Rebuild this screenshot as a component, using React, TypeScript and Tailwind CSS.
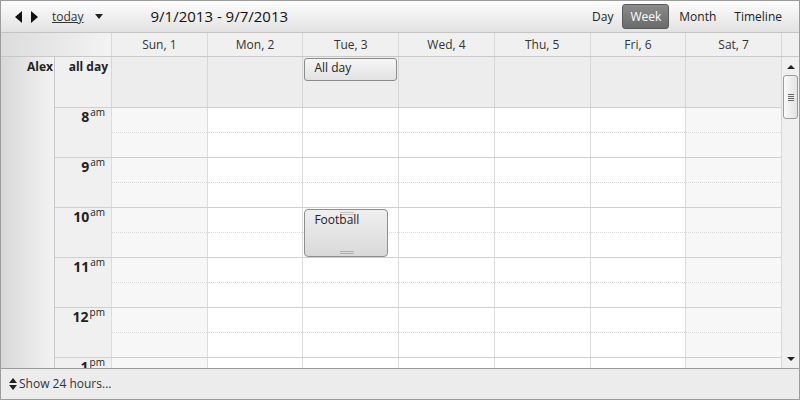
import React from "react";

const days = ["Sun, 1", "Mon, 2", "Tue, 3", "Wed, 4", "Thu, 5", "Fri, 6", "Sat, 7"];
const hours = [
  { h: "8", m: "am" },
  { h: "9", m: "am" },
  { h: "10", m: "am" },
  { h: "11", m: "am" },
  { h: "12", m: "pm" },
  { h: "1", m: "pm" },
];

function Arrows() {
  return (
    <svg width="24" height="12" viewBox="0 0 24 12">
      <path d="M7 0 L7 12 L0 6 Z" fill="#111" />
      <path d="M16 0 L16 12 L23 6 Z" fill="#111" />
    </svg>
  );
}

export default function App() {
  return (
    <div
      className="w-[800px] h-[400px] border border-[#9c9c9c] flex flex-col bg-white text-[#333] overflow-hidden"
      style={{ fontFamily: '"Open Sans", "Noto Sans", sans-serif' }}
    >
      {/* toolbar */}
      <div className="h-[32px] shrink-0 border-b border-[#c4c4c4] bg-gradient-to-b from-[#fdfdfd] to-[#e2e2e2] flex items-center">
        <div className="ml-[14px] mt-[1px]">
          <Arrows />
        </div>
        <span className="ml-[13px] text-[12px] underline text-[#333]">today</span>
        <svg className="ml-[11px]" width="8" height="5" viewBox="0 0 8 5">
          <path d="M0 0 L8 0 L4 5 Z" fill="#222" />
        </svg>
        <span className="ml-[48px] text-[15px] text-[#111]">9/1/2013 - 9/7/2013</span>
        <div className="ml-auto mr-[17px] flex items-center text-[12px] text-[#222]">
          <span className="mr-[9px]">Day</span>
          <span className="h-[25px] px-[7px] flex items-center rounded-[3px] border border-[#5a5a5a] bg-gradient-to-b from-[#8c8c8c] to-[#6a6a6a] text-white mr-[10px]">
            Week
          </span>
          <span className="mr-[18px]">Month</span>
          <span>Timeline</span>
        </div>
      </div>

      {/* header */}
      <div className="h-[24px] shrink-0 flex border-b border-[#c8c8c8] bg-[#f0f0f0] text-[12px]">
        <div className="w-[110px] shrink-0 bg-gradient-to-r from-[#dcdcdc] to-[#f3f3f3]" />
        <div className="flex-1 grid grid-cols-7">
          {days.map((d) => (
            <div key={d} className="border-l border-[#d8d8d8] flex items-center justify-center">
              {d}
            </div>
          ))}
        </div>
        <div className="w-[18px] shrink-0 border-l border-[#d8d8d8]" />
      </div>

      {/* body */}
      <div className="flex-1 flex min-h-0">
        <div className="w-[54px] shrink-0 border-r border-[#c8c8c8] bg-gradient-to-r from-[#d8d8d8] to-[#f3f3f3] text-right text-[12px] font-bold text-[#222] pt-[1px] pr-[1px]">
          Alex
        </div>
        <div className="flex-1 flex flex-col min-w-0 overflow-hidden">
          {/* all day row */}
          <div className="h-[51px] shrink-0 flex border-b border-[#d0d0d0]">
            <div className="w-[56px] shrink-0 bg-[#f0f0f0] text-right pr-[3px] text-[12px] font-bold text-[#222] pt-[1px]">
              all day
            </div>
            <div className="flex-1 grid grid-cols-7 bg-[#ededed]">
              {days.map((d, i) => (
                <div key={d} className="border-l border-[#d6d6d6] relative">
                  {i === 2 && (
                    <div className="absolute left-[1px] right-[1px] top-[1px] h-[23px] rounded-[3px] border border-[#8c8c8c] bg-gradient-to-b from-[#f6f6f6] to-[#e2e2e2] overflow-hidden px-[9px] text-[12px] leading-[17px] text-[#222]">
                      All day
                      <br />
                      <span className="text-[#555]">meeting</span>
                    </div>
                  )}
                </div>
              ))}
            </div>
          </div>
          {hours.map((hr, hi) => (
            <div key={hr.h} className="h-[50px] shrink-0 flex border-b border-[#d0d0d0]">
              <div className="w-[56px] shrink-0 bg-[#f0f0f0] flex justify-end pr-[6px] text-[#222]">
                <span className="text-[14px] font-bold leading-none mt-[2px]">{hr.h}</span>
                <span className="text-[10px] leading-none ml-[1px] mt-[-1px]">{hr.m}</span>
              </div>
              <div className="flex-1 grid grid-cols-7">
                {days.map((d, i) => (
                  <div
                    key={d}
                    className={`border-l border-[#dcdcdc] relative flex flex-col ${i === 0 || i === 6 ? "bg-[#f7f7f7]" : "bg-white"}`}
                  >
                    <div className="h-[25px] border-b border-dotted border-[#dadada]" />
                    {hi === 2 && i === 2 && (
                      <div className="absolute left-[1px] top-[1px] w-[84px] h-[48px] rounded-[4px] border border-[#8e8e8e] bg-gradient-to-b from-[#efefef] to-[#d9d9d9] px-[9px] pt-[3px] text-[12px] leading-[14px] text-[#222]">
                        <div className="absolute left-[35px] top-[2px] w-[14px] h-[3px] border-y border-[#c4c4c4]" />
                        <span className="relative">Football</span>
                        <div className="absolute left-[35px] bottom-[2px] w-[14px] h-[3px] border-y border-[#b0b0b0]" />
                      </div>
                    )}
                  </div>
                ))}
              </div>
            </div>
          ))}
        </div>
        {/* scrollbar */}
        <div className="w-[18px] shrink-0 border-l border-[#d8d8d8] bg-[#f0f0f0] flex flex-col items-center">
          <svg className="mt-[8px]" width="8" height="4" viewBox="0 0 8 4">
            <path d="M0 4 L8 4 L4 0 Z" fill="#222" />
          </svg>
          <div className="mt-[6px] w-[15px] h-[44px] rounded-[3px] border border-[#9a9a9a] bg-gradient-to-r from-[#fafafa] to-[#e2e2e2] flex flex-col items-center justify-center gap-[1px]">
            <div className="w-[6px] h-[1px] bg-[#666]" />
            <div className="w-[6px] h-[1px] bg-[#666]" />
            <div className="w-[6px] h-[1px] bg-[#666]" />
            <div className="w-[6px] h-[1px] bg-[#666]" />
          </div>
          <svg className="mt-auto mb-[7px]" width="8" height="4" viewBox="0 0 8 4">
            <path d="M0 0 L8 0 L4 4 Z" fill="#222" />
          </svg>
        </div>
      </div>

      {/* footer */}
      <div className="h-[31px] shrink-0 border-t border-[#9c9c9c] bg-[#ececec] flex items-center text-[12px] text-[#333]">
        <svg className="ml-[8px]" width="8" height="12" viewBox="0 0 8 12">
          <path d="M0 5 L8 5 L4 0 Z" fill="#222" />
          <path d="M0 7 L8 7 L4 12 Z" fill="#222" />
        </svg>
        <span className="ml-[2px]">Show 24 hours...</span>
      </div>
    </div>
  );
}
